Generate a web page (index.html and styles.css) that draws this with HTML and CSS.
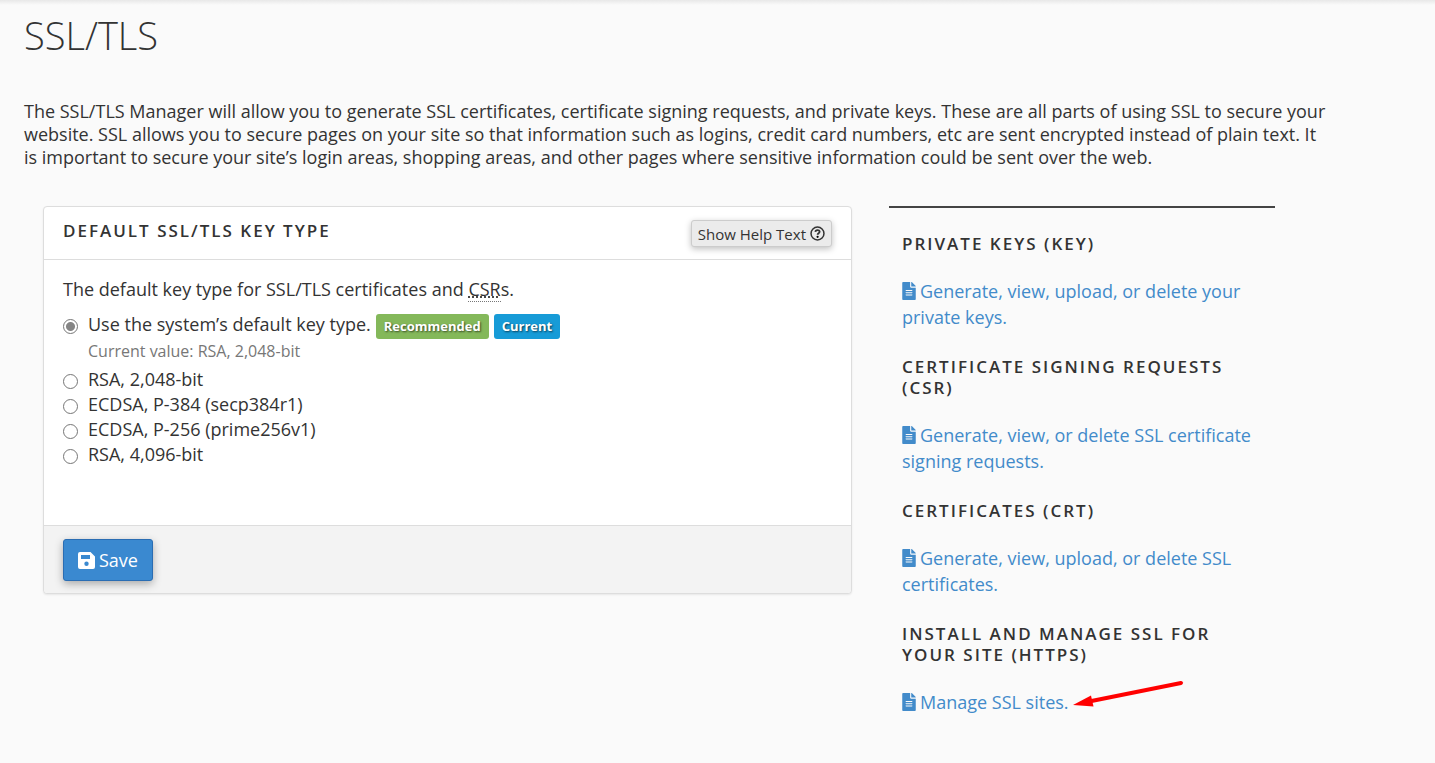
FILE: index.html
```html
<!DOCTYPE html>
<html lang="en">
<head>
<meta charset="utf-8">
<title>SSL/TLS</title>
<link rel="stylesheet" href="styles.css">
</head>
<body>
<svg class="sprite" aria-hidden="true">
  <symbol id="icon-file" viewBox="0 0 384 512">
    <path d="M224 136V0H24C10.700 0 0 10.700 0 24v464c0 13.300 10.700 24 24 24h336c13.300 0 24-10.700 24-24V160H248c-13.200 0-24-10.800-24-24zm64 236c0 6.600-5.400 12-12 12H108c-6.600 0-12-5.400-12-12v-8c0-6.600 5.400-12 12-12h168c6.600 0 12 5.400 12 12v8zm0-64c0 6.600-5.400 12-12 12H108c-6.600 0-12-5.400-12-12v-8c0-6.600 5.400-12 12-12h168c6.600 0 12 5.400 12 12v8zm0-72v8c0 6.600-5.400 12-12 12H108c-6.600 0-12-5.400-12-12v-8c0-6.600 5.400-12 12-12h168c6.600 0 12 5.400 12 12zm96-114.100v6.100H256V0h6.100c6.400 0 12.500 2.500 17 7l97.900 98c4.500 4.500 7 10.600 7 16.900z"/>
  </symbol>
</svg>
<main class="page">
  <h1 class="page-title">SSL/TLS</h1>
  <p class="intro">The SSL/TLS Manager will allow you to generate SSL certificates, certificate signing requests, and private keys. These are all parts of using SSL to secure your website. SSL allows you to secure pages on your site so that information such as logins, credit card numbers, etc are sent encrypted instead of plain text. It is important to secure your site’s login areas, shopping areas, and other pages where sensitive information could be sent over the web.</p>
  <div class="columns">
    <form class="card">
      <header class="card-header">
        <h2 class="heading">Default SSL/TLS Key Type</h2>
        <button type="button" class="help-button">Show Help Text
          <svg class="help-icon" viewBox="0 0 16 16" aria-hidden="true"><circle cx="8" cy="8" r="6.900" fill="none" stroke="currentColor" stroke-width="1.600"/><path d="M5.700 6.200C5.900 3.700 10.300 3.700 10.300 6.200C10.300 7.700 8.100 7.700 8.100 9.300" fill="none" stroke="currentColor" stroke-width="1.900"/><circle cx="8.100" cy="11.500" r="1.200"/></svg>
        </button>
      </header>
      <div class="card-body">
        <p class="lead">The default key type for SSL/TLS certificates and <abbr class="abbr" title="Certificate Signing Request">CSR</abbr>s.</p>
        <div class="option">
          <input class="radio" type="radio" name="key" id="key-system" checked>
          <label for="key-system">Use the system’s default key type.</label>
          <span class="tags"><span class="tag tag-green">Recommended</span><span class="tag tag-blue">Current</span></span>
        </div>
        <p class="current-value">Current value: RSA, 2,048-bit</p>
        <div class="option"><input class="radio" type="radio" name="key" id="key-rsa2"><label for="key-rsa2">RSA, 2,048-bit</label></div>
        <div class="option"><input class="radio" type="radio" name="key" id="key-p384"><label for="key-p384">ECDSA, P-384 (secp384r1)</label></div>
        <div class="option"><input class="radio" type="radio" name="key" id="key-p256"><label for="key-p256">ECDSA, P-256 (prime256v1)</label></div>
        <div class="option"><input class="radio" type="radio" name="key" id="key-rsa4"><label for="key-rsa4">RSA, 4,096-bit</label></div>
      </div>
      <footer class="card-footer">
        <button type="button" class="save-button"><svg class="save-icon" viewBox="0 0 17 17" aria-hidden="true"><path fill-rule="evenodd" d="M2 0H12.500L17 4.500V15Q17 17 15 17H2Q0 17 0 15V2Q0 0 2 0ZM3 3V7H12V3ZM8.500 9.500A2.200 2.200 0 1 0 8.500 13.900A2.200 2.200 0 1 0 8.500 9.500Z"/></svg>Save</button>
      </footer>
    </form>
    <aside class="sidebar">
      <section class="topic">
        <h2 class="heading">Private Keys (KEY)</h2>
        <a class="link" href="#keys"><svg class="file-icon" aria-hidden="true"><use href="#icon-file"/></svg>Generate, view, upload, or delete your private keys.</a>
      </section>
      <section class="topic">
        <h2 class="heading">Certificate Signing Requests (CSR)</h2>
        <a class="link" href="#csrs"><svg class="file-icon" aria-hidden="true"><use href="#icon-file"/></svg>Generate, view, or delete SSL certificate signing requests.</a>
      </section>
      <section class="topic">
        <h2 class="heading">Certificates (CRT)</h2>
        <a class="link" href="#certs"><svg class="file-icon" aria-hidden="true"><use href="#icon-file"/></svg>Generate, view, upload, or delete SSL certificates.</a>
      </section>
      <section class="topic">
        <h2 class="heading">Install and Manage SSL for your site (HTTPS)</h2>
        <a class="link link-marked" href="#sites"><svg class="file-icon" aria-hidden="true"><use href="#icon-file"/></svg>Manage SSL sites.<svg class="arrow" viewBox="0 0 112 32" aria-hidden="true"><path d="M16 22.500L108 4" stroke="#f00" stroke-width="4" stroke-linecap="round"/><path d="M0 26L18 16.500L20.500 27.500Z" fill="#f00"/></svg></a>
      </section>
    </aside>
  </div>
</main>
</body>
</html>
```
FILE: styles.css
```css
* { box-sizing: border-box; }
body {
  margin: 0;
  min-height: 100vh;
  background: linear-gradient(#e8e8e8, #fafafa 5px) no-repeat #fafafa;
  color: #333;
  font: 18px/23px "Open Sans", sans-serif;
}
h1, h2, p { margin: 0; }
.sprite { display: none; }
.page { padding: 13px 106px 32px 24px; }
.page-title { font-size: 38px; line-height: 44px; font-weight: 300; }
.intro { margin-top: 43px; }
.columns {
  display: grid;
  grid-template-columns: 809fr 386fr;
  gap: 37px;
  align-items: start;
  margin: 37px 54px 0 19px;
}
.heading {
  font-size: 17px;
  line-height: 21px;
  font-weight: 600;
  letter-spacing: 2px;
  text-transform: uppercase;
}
.card {
  background: #fff;
  border: 1px solid #ddd;
  border-radius: 4px;
  box-shadow: 0 1px 2px rgba(0, 0, 0, .08);
}
.card-header {
  display: flex;
  justify-content: space-between;
  align-items: start;
  padding: 13px 19px 12px;
  border-bottom: 1px solid #ddd;
}
.help-button {
  display: flex;
  align-items: center;
  gap: 4px;
  height: 27px;
  padding: 0 6px;
  border: 1px solid #ccc;
  border-radius: 3px;
  background: #ebebeb;
  color: #333;
  font: 15px/20px "Open Sans", sans-serif;
  box-shadow: 0 2px 6px rgba(0, 0, 0, .25);
}
.help-icon { width: 15px; height: 15px; }
.card-body { padding: 18px 19px 58px; }
.lead { margin-bottom: 9px; }
.abbr { text-decoration: underline dotted; border-bottom: 1px dotted #777; }
.option {
  display: flex;
  align-items: center;
  min-height: 25px;
}
.radio {
  appearance: none;
  flex: none;
  width: 15px;
  height: 15px;
  margin: 4px 10px 0 0;
  border: 1px solid #767676;
  border-radius: 50%;
  background: #fff;
}
.radio:checked { background: radial-gradient(circle, #858585 4px, #fff 5px); }
.tags { display: flex; gap: 5px; margin: 4px 0 0 5px; }
.tag {
  padding: 0 8px;
  border-radius: 3px;
  color: #fff;
  font-size: 13px;
  line-height: 25px;
  font-weight: 700;
  text-shadow: 1px 1px 2px rgba(0, 0, 0, .6);
}
.tag-green { background: #84b85a; }
.tag-blue { background: #179bd7; }
.current-value {
  padding: 1px 0 4px 25px;
  color: #777;
  font-size: 16px;
}
.card-footer {
  padding: 13px 19px 12px;
  background: #f3f3f3;
  border-top: 1px solid #ddd;
  border-radius: 0 0 4px 4px;
}
.save-button {
  display: flex;
  align-items: center;
  gap: 4px;
  height: 42px;
  padding: 0 14px;
  border: 1px solid #2a6db3;
  border-radius: 3px;
  background: #3a89d0;
  color: #fff;
  font: 18px/24px "Open Sans", sans-serif;
  box-shadow: 0 3px 8px rgba(0, 0, 0, .3);
}
.save-icon { width: 17px; height: 17px; fill: currentColor; }
.sidebar {
  display: grid;
  gap: 26px;
  padding: 25px 24px 0 13px;
  border-top: 2px solid #444;
}
.link {
  display: block;
  margin-top: 24px;
  color: #428bca;
  line-height: 26px;
  text-decoration: none;
}
.file-icon {
  width: 14px;
  height: 18px;
  margin-right: 4px;
  vertical-align: -2px;
  fill: currentColor;
}
.link-marked { position: relative; width: max-content; }
.arrow {
  position: absolute;
  top: -10px;
  left: calc(100% + 4px);
  width: 112px;
  height: 32px;
}
```
